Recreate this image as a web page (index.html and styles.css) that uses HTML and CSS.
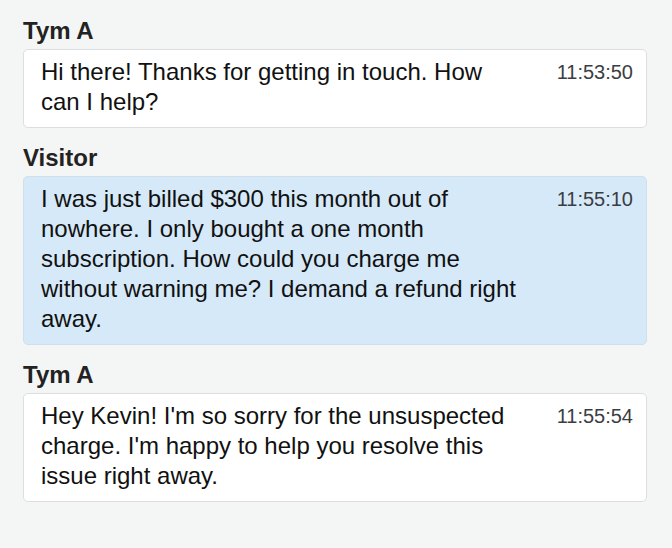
FILE: index.html
```html
<!DOCTYPE html>
<html lang="en">
<head>
  <meta charset="UTF-8" />
  <meta name="viewport" content="width=device-width, initial-scale=1.0"/>
  <title>Chat transcript</title>
  <link rel="stylesheet" href="styles.css">
</head>
<body>
  <div class="transcript">

    <!-- Agent -->
    <div class="message">
      <div class="author">Tym A</div>
      <div class="bubble">
        <p class="text">Hi there! Thanks for getting in touch. How can I help?</p>
        <span class="time">11:53:50</span>
      </div>
    </div>

    <!-- Visitor -->
    <div class="message">
      <div class="author">Visitor</div>
      <div class="bubble visitor">
        <p class="text">I was just billed $300 this month out of nowhere. I only bought a one month subscription. How could you charge me without warning me? I demand a refund right away.</p>
        <span class="time">11:55:10</span>
      </div>
    </div>

    <!-- Agent -->
    <div class="message">
      <div class="author">Tym A</div>
      <div class="bubble">
        <p class="text">Hey Kevin! I'm so sorry for the unsuspected charge. I'm happy to help you resolve this issue right away.</p>
        <span class="time">11:55:54</span>
      </div>
    </div>

  </div>
</body>
</html>
```

FILE: styles.css
```css
body {
  margin: 0;
  background-color: #f4f5f5;
  font-family: "Liberation Sans", Arial, sans-serif;
  color: #111;
}
.transcript {
  padding: 19px 25px 0 23px;
  display: flex;
  flex-direction: column;
  gap: 18px;
}
.author {
  font-size: 24px;
  font-weight: bold;
  line-height: 24px;
  color: #222;
  margin-bottom: 6px;
}
.bubble {
  display: flex;
  align-items: flex-start;
  background-color: #fff;
  border: 1px solid #dcdfe2;
  border-radius: 5px;
  padding: 7px 13px 10px 17px;
}
.bubble.visitor {
  background-color: #d6e9f8;
  border-color: #d0dfea;
}
.text {
  flex: 1;
  margin: 0;
  max-width: 480px;
  font-size: 24px;
  line-height: 30px;
}
.time {
  margin-left: auto;
  font-size: 20px;
  line-height: 30px;
  color: #3a3d42;
}
```
